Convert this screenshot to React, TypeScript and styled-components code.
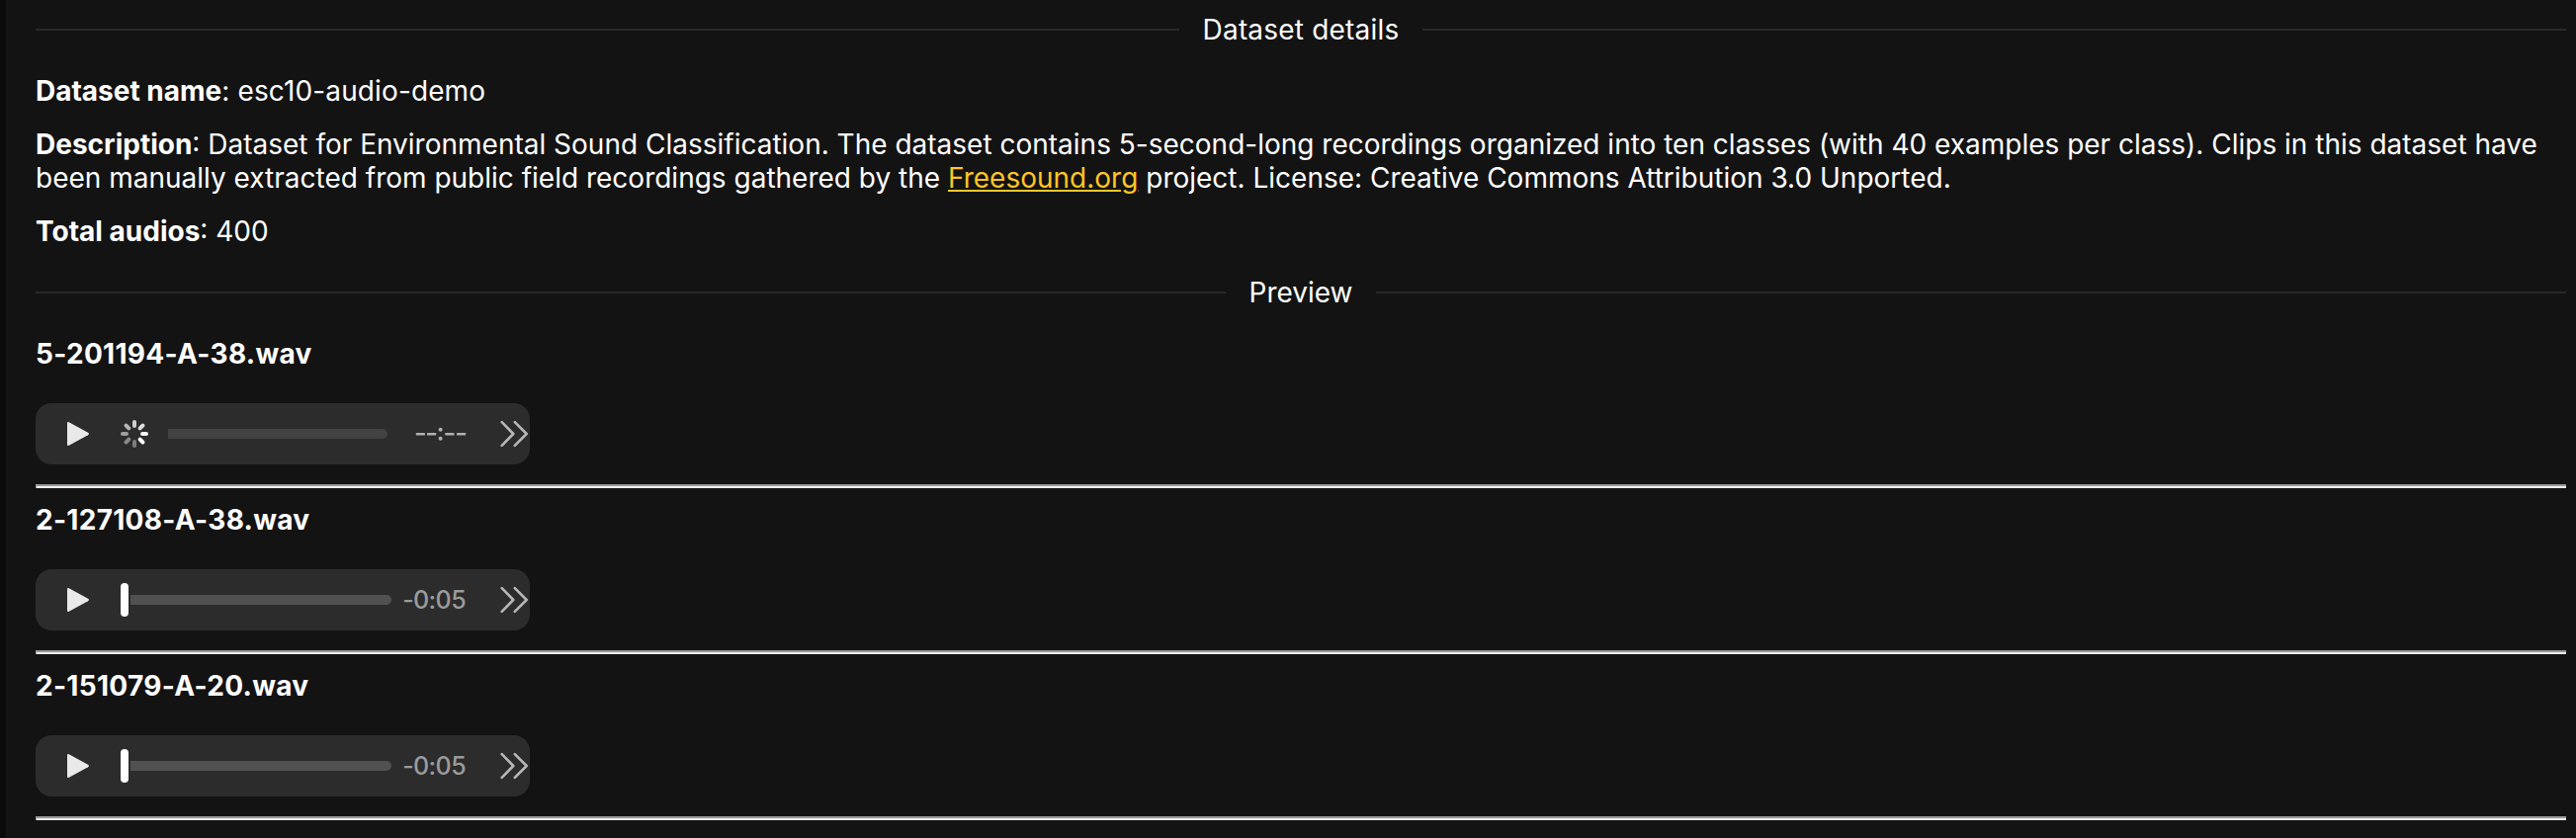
import React from "react";
import styled, { createGlobalStyle } from "styled-components";

const GlobalStyle = createGlobalStyle`
  * { box-sizing: border-box; }
  html, body { margin: 0; background: #131313; }
  body { overflow: hidden; }
`;

const Page = styled.main`
  height: 848px;
  border-left: 6px solid #0b0b0b;
  padding: 13px 10px 0 30px;
  background: #131313;
  color: #fff;
  font: 400 28px/34px Inter, "Liberation Sans", sans-serif;
`;

const Divider = styled.div<{ $tracking?: number }>`
  display: flex;
  align-items: center;
  gap: 23.5px;
  height: 34px;
  margin-bottom: 28px;
  letter-spacing: ${(p) => p.$tracking ?? 0}px;
  &::before, &::after {
    content: "";
    flex: 1;
    height: 2px;
    background: #292929;
  }
`;

const Details = styled.section`
  display: flex;
  flex-direction: column;
  gap: 20px;
  margin-bottom: 28px;
`;

const Paragraph = styled.p`
  margin: 0;
`;

const Label = styled.strong`
  font-weight: 700;
`;

const Value = styled.span`
  letter-spacing: 0.12px;
`;

const Link = styled.a`
  color: #ffc526;
  text-decoration: underline;
  text-decoration-thickness: 2px;
  text-underline-offset: 2px;
`;

const Clip = styled.article`
  height: 168px;
  padding-bottom: 15px;
`;

const ClipName = styled.h3`
  margin: 0 0 33px;
  font-size: 28px;
  line-height: 34px;
  font-weight: 700;
  letter-spacing: 0.3px;
`;

const Player = styled.div`
  display: flex;
  align-items: center;
  width: 500px;
  height: 62px;
  margin-bottom: 20px;
  padding: 0 2px 0 31px;
  border-radius: 16px;
  background: #2c2c2c;
`;

const Rule = styled.hr`
  margin: 0;
  height: 4px;
  border: 0;
  border-top: 2px solid #999;
  border-left: 1px solid #999;
  background: #ededed;
`;

const PlayIcon = styled.svg`
  flex: none;
  width: 24px;
  height: 26px;
  margin-right: 31px;
`;

const SpinnerIcon = styled.svg`
  flex: none;
  width: 28px;
  height: 28px;
  margin-right: 20px;
`;

const Knob = styled.div`
  flex: none;
  width: 8px;
  height: 34px;
  margin-right: 2px;
  border-radius: 4px;
  background: #fff;
`;

const Track = styled.div<{ $loading?: boolean }>`
  flex: none;
  width: ${(p) => (p.$loading ? 222 : 264)}px;
  height: 10px;
  border-radius: 0 5px 5px 0;
  background: ${(p) => (p.$loading ? "#424242" : "#515151")};
`;

const Time = styled.span`
  flex: 1;
  text-align: right;
  white-space: nowrap;
  color: #9b9b9b;
  font-size: 25px;
  font-weight: 500;
  letter-spacing: -0.6px;
`;

const EmptyTimeIcon = styled.svg`
  flex: none;
  width: 50px;
  height: 16px;
  margin-left: auto;
  overflow: visible;
`;

const MoreIcon = styled.svg`
  flex: none;
  width: 28px;
  height: 28px;
  margin-left: 35px;
  overflow: visible;
`;

const EmptyTime = () => (
  <EmptyTimeIcon viewBox="0 0 50 16" fill="#b0b0b0" role="img" aria-label="--:--">
    <rect x="-0.2" y="6.9" width="9.2" height="2.7" rx="0.6" />
    <rect x="11" y="6.9" width="9.2" height="2.7" rx="0.6" />
    <circle cx="24.6" cy="3.7" r="2" />
    <circle cx="24.6" cy="12.7" r="2" />
    <rect x="29.3" y="6.9" width="9.2" height="2.7" rx="0.6" />
    <rect x="41" y="6.9" width="9.2" height="2.7" rx="0.6" />
  </EmptyTimeIcon>
);

const spokes = ["#d0d0d0", "#dcdcdc", "#f4f4f4", "#ffffff", "#7d7d7d", "#8a8a8a", "#a0a0a0", "#b4b4b4"];

const Spinner = () => (
  <SpinnerIcon viewBox="0 0 28 28" strokeWidth="4" strokeLinecap="round">
    {spokes.map((color, i) => (
      <line key={i} x1="14" y1="2" x2="14" y2="6" stroke={color} transform={`rotate(${i * 45} 14 14)`} />
    ))}
  </SpinnerIcon>
);

const clips = [
  { name: "5-201194-A-38.wav", time: null },
  { name: "2-127108-A-38.wav", time: "-0:05" },
  { name: "2-151079-A-20.wav", time: "-0:05" },
];

export default function App() {
  return (
    <>
      <GlobalStyle />
      <Page>
        <Divider $tracking={0.2}>Dataset details</Divider>
        <Details>
          <Paragraph>
            <Label>Dataset name</Label>
            <Value>: esc10-audio-demo</Value>
          </Paragraph>
          <Paragraph>
            <Label>Description</Label>: Dataset for Environmental Sound Classification. The dataset contains
            5-second-long recordings organized into ten classes (with 40 examples per class). Clips in this
            dataset have been manually extracted from public field recordings gathered by the{" "}
            <Link href="#">Freesound.org</Link> project. License: Creative Commons Attribution 3.0 Unported.
          </Paragraph>
          <Paragraph><Label>Total audios</Label>: 400</Paragraph>
        </Details>
        <Divider>Preview</Divider>
        {clips.map((clip) => (
          <Clip key={clip.name}>
            <ClipName>{clip.name}</ClipName>
            <Player>
              <PlayIcon viewBox="0 0 24 26" fill="#e9e9e9">
                <path d="M1 2.2Q1 .4 2.8 1.2L22 11.8Q24 13 22 14.2L2.8 24.8Q1 25.6 1 23.8Z" />
              </PlayIcon>
              {clip.time ? <Knob /> : <Spinner />}
              <Track $loading={!clip.time} />
              {clip.time ? <Time>{clip.time}</Time> : <EmptyTime />}
              <MoreIcon viewBox="0 0 28 28" fill="none" stroke="#b7b7b7" strokeWidth="2.6" strokeLinecap="round" strokeLinejoin="round">
                <path d="M1.7 2.1L13.3 14L1.7 25.9M14.8 2.1L26.7 14L14.8 25.9" />
              </MoreIcon>
            </Player>
            <Rule />
          </Clip>
        ))}
      </Page>
    </>
  );
}
